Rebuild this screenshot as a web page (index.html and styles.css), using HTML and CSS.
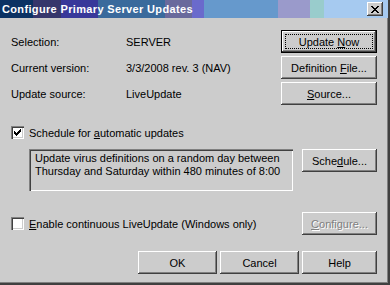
FILE: index.html
```html
<!DOCTYPE html>
<html lang="en">
  <head>
    <meta charset="UTF-8" />
    <title>Configure Primary Server Updates</title>
    <link rel="stylesheet" href="styles.css">
  </head>
  <body>
    <div class="window">
      <div class="titlebar">
        <span class="title">Configure Primary Server Updates</span>
        <button class="close-btn" type="button">
          <svg width="8" height="7" viewBox="0 0 8 7" shape-rendering="crispEdges">
            <path d="M0 0h2v1h1v1h2v-1h1v-1h2v1h-1v1h-1v1h-1v1h1v1h1v1h1v1h-2v-1h-1v-1h-2v1h-1v1h-2v-1h1v-1h1v-1h1v-1h-1v-1h-1z" fill="#000" />
          </svg>
        </button>
      </div>

      <div class="main">
        <div class="top">
          <div class="info">
            <span>Selection:</span>
            <span>SERVER</span>
            <span>Current version:</span>
            <span>3/3/2008 rev. 3 (NAV)</span>
            <span>Update source:</span>
            <span>LiveUpdate</span>
          </div>
          <div class="side-buttons">
            <button class="btn btn-default" type="button"><span class="focus"><span>Update <u>N</u>ow</span></span></button>
            <button class="btn" type="button"><span>Definition <u>F</u>ile...</span></button>
            <button class="btn" type="button"><span><u>S</u>ource...</span></button>
          </div>
        </div>

        <label class="check-row auto-row">
          <span class="checkbox">
            <svg width="7" height="7" viewBox="0 0 7 7" shape-rendering="crispEdges">
              <path d="M6 0h1v1h-1zM5 1h2v1h-2zM0 2h1v1h-1zM4 2h3v1h-3zM0 3h2v1h-2zM3 3h3v1h-3zM0 4h5v1h-5zM1 5h3v1h-3zM2 6h1v1h-1z" fill="#000" />
            </svg>
          </span>
          <span>Schedule for <u>a</u>utomatic updates</span>
        </label>

        <div class="schedule">
          <div class="schedule-text">
            Update virus definitions on a random day between
            Thursday and Saturday within 480 minutes of 8:00
          </div>
          <button class="btn btn-small" type="button"><span>Sche<u>d</u>ule...</span></button>
        </div>

        <div class="enable-row">
          <label class="check-row">
            <span class="checkbox"></span>
            <span><u>E</u>nable continuous LiveUpdate (Windows only)</span>
          </label>
          <button class="btn btn-small btn-disabled" type="button"><span><u>C</u>onfigure...</span></button>
        </div>

        <div class="actions">
          <button class="btn btn-wide" type="button">OK</button>
          <button class="btn btn-wide" type="button">Cancel</button>
          <button class="btn btn-small" type="button">Help</button>
        </div>
      </div>
    </div>
  </body>
</html>
```

FILE: styles.css
```css
* {
  margin: 0;
  padding: 0;
  box-sizing: border-box;
}

body {
  width: 390px;
  height: 285px;
  overflow: hidden;
  background-color: #cccccc;
  font-family: "Liberation Sans", Arial, sans-serif;
  font-size: 11px;
  color: #000000;
}

.window {
  width: 390px;
  height: 285px;
  background-color: #cccccc;
  box-shadow: inset -2px -2px 0 #404040, inset -3px -3px 0 #808080;
}

.titlebar {
  height: 18px;
  width: 388px;
  display: flex;
  align-items: center;
  justify-content: space-between;
  padding: 0 5px 0 2px;
  background: linear-gradient(
    to right,
    #0b3263 0px, #0b3263 33px,
    #36366b 33px, #36366b 61px,
    #38389a 61px, #38389a 98px,
    #3a6a9c 98px, #3a6a9c 165px,
    #6a6a9c 165px, #6a6a9c 192px,
    #6a6acc 192px, #6a6acc 204px,
    #6699cc 204px, #6699cc 278px,
    #9a9acb 278px, #9a9acb 310px,
    #99cccc 310px, #99cccc 324px,
    #a6caf0 324px
  );
}

.title {
  color: #ffffff;
  font-weight: bold;
  font-size: 11px;
  letter-spacing: 0.35px;
}

.close-btn {
  width: 16px;
  height: 14px;
  display: flex;
  align-items: center;
  justify-content: center;
  background-color: #cccccc;
  border: none;
  box-shadow: inset -1px -1px 0 #404040, inset 1px 1px 0 #ffffff, inset -2px -2px 0 #808080;
}

.main {
  padding: 0 13px 0 11px;
}

.top {
  display: flex;
  justify-content: space-between;
  margin-top: 12px;
}

.info {
  display: grid;
  grid-template-columns: 115px auto;
  grid-auto-rows: 23px;
  row-gap: 3px;
  align-items: center;
}

.side-buttons {
  display: flex;
  flex-direction: column;
  gap: 3px;
  width: 96px;
}

.btn {
  height: 23px;
  display: flex;
  align-items: center;
  justify-content: center;
  background-color: #cccccc;
  border: none;
  font-family: inherit;
  font-size: 11px;
  color: #000000;
  box-shadow: inset -1px -1px 0 #404040, inset 1px 1px 0 #ffffff, inset -2px -2px 0 #808080;
}

.btn-default {
  border: 1px solid #000000;
  padding: 3px;
}

.focus {
  width: 100%;
  height: 100%;
  display: flex;
  align-items: center;
  justify-content: center;
  border: 1px dotted #000000;
}

.btn-small {
  width: 75px;
}

.btn-wide {
  width: 79px;
}

.btn-disabled {
  color: #808080;
  text-shadow: 1px 1px 0 #ffffff;
}

.check-row {
  display: flex;
  align-items: center;
  gap: 5px;
}

.auto-row {
  margin-top: 21px;
  height: 13px;
}

.checkbox {
  width: 13px;
  height: 13px;
  display: flex;
  align-items: center;
  justify-content: center;
  background-color: #ffffff;
  box-shadow: inset 1px 1px 0 #808080, inset 2px 2px 0 #404040, inset -1px -1px 0 #ffffff, inset -2px -2px 0 #cccccc;
}

.schedule {
  display: flex;
  align-items: flex-start;
  gap: 9px;
  margin: 10px 0 0 18px;
}

.schedule-text {
  width: 264px;
  height: 42px;
  padding: 3px 4px 0 6px;
  line-height: 13px;
  box-shadow: inset 1px 1px 0 #808080, inset 2px 2px 0 #404040, inset -1px -1px 0 #ffffff;
}

.enable-row {
  display: flex;
  justify-content: space-between;
  align-items: center;
  margin-top: 21px;
}

.actions {
  display: flex;
  justify-content: flex-end;
  gap: 3px;
  margin-top: 16px;
}
```
